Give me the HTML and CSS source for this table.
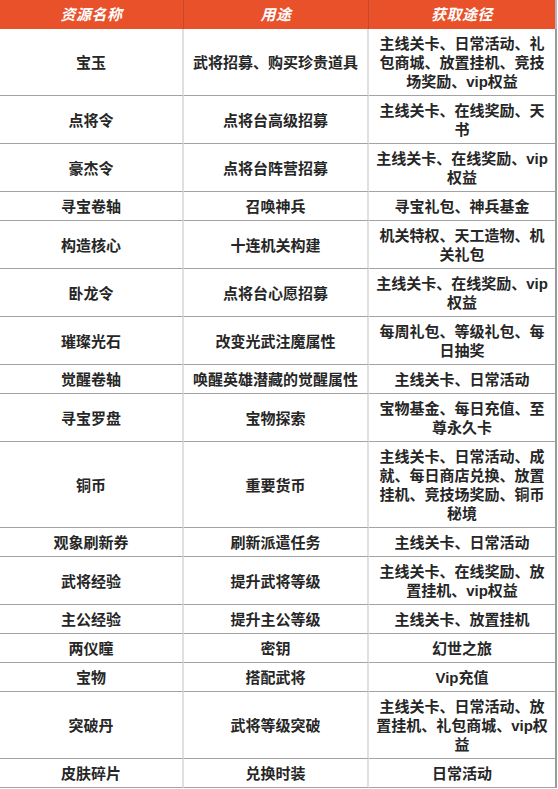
FILE: index.html
```html
<!DOCTYPE html>
<html lang="zh-CN">
<head>
<meta charset="utf-8">
<title>资源表</title>
<link rel="stylesheet" href="styles.css">
</head>
<body>
<div class="table">
  <div class="th">资源名称</div><div class="th">用途</div><div class="th last">获取途径</div>

  <div class="td">宝玉</div><div class="td">武将招募、购买珍贵道具</div><div class="td last">主线关卡、日常活动、礼包商城、放置挂机、竞技场奖励、vip权益</div>
  <div class="td">点将令</div><div class="td">点将台高级招募</div><div class="td last">主线关卡、在线奖励、天书</div>
  <div class="td">豪杰令</div><div class="td">点将台阵营招募</div><div class="td last">主线关卡、在线奖励、vip权益</div>
  <div class="td">寻宝卷轴</div><div class="td">召唤神兵</div><div class="td last">寻宝礼包、神兵基金</div>
  <div class="td">构造核心</div><div class="td">十连机关构建</div><div class="td last">机关特权、天工造物、机关礼包</div>
  <div class="td">卧龙令</div><div class="td">点将台心愿招募</div><div class="td last">主线关卡、在线奖励、vip权益</div>
  <div class="td">璀璨光石</div><div class="td">改变光武注魔属性</div><div class="td last">每周礼包、等级礼包、每日抽奖</div>
  <div class="td">觉醒卷轴</div><div class="td">唤醒英雄潜藏的觉醒属性</div><div class="td last">主线关卡、日常活动</div>
  <div class="td">寻宝罗盘</div><div class="td">宝物探索</div><div class="td last">宝物基金、每日充值、至尊永久卡</div>
  <div class="td">铜币</div><div class="td">重要货币</div><div class="td last">主线关卡、日常活动、成就、每日商店兑换、放置挂机、竞技场奖励、铜币秘境</div>
  <div class="td">观象刷新券</div><div class="td">刷新派遣任务</div><div class="td last">主线关卡、日常活动</div>
  <div class="td">武将经验</div><div class="td">提升武将等级</div><div class="td last">主线关卡、在线奖励、放置挂机、vip权益</div>
  <div class="td">主公经验</div><div class="td">提升主公等级</div><div class="td last">主线关卡、放置挂机</div>
  <div class="td">两仪瞳</div><div class="td">密钥</div><div class="td last">幻世之旅</div>
  <div class="td">宝物</div><div class="td">搭配武将</div><div class="td last">Vip充值</div>
  <div class="td">突破丹</div><div class="td">武将等级突破</div><div class="td last">主线关卡、日常活动、放置挂机、礼包商城、vip权益</div>
  <div class="td">皮肤碎片</div><div class="td">兑换时装</div><div class="td last">日常活动</div>
</div>
</body>
</html>
```
FILE: styles.css
```css
* { box-sizing: border-box; }
html, body {
  margin: 0;
  padding: 0;
  background: #ffffff;
}
body {
  font-family: "Liberation Sans", "Noto Sans CJK SC", sans-serif;
  font-size: 15px;
  line-height: 19px;
  font-weight: 700;
  color: #262626;
}
.table {
  display: grid;
  grid-template-columns: 184px 185px 188px;
  width: 557px;
}
.th {
  height: 29px;
  background: #e9512b;
  color: #ffffff;
  font-style: italic;
  display: flex;
  align-items: center;
  justify-content: center;
  border-right: 1px solid #c8482a;
  letter-spacing: 0.5px;
}
.th.last {
  border-right: 2px solid #b6b6b6;
}
.td {
  display: flex;
  align-items: center;
  justify-content: center;
  text-align: center;
  padding: 5px 8px 4px;
  border-bottom: 1px solid #a3a3a3;
  border-right: 2px solid #e0e0e0;
}
.td.last {
  border-right: 2px solid #9a9a9a;
  padding: 5px 6px 4px 6px;
}
```
